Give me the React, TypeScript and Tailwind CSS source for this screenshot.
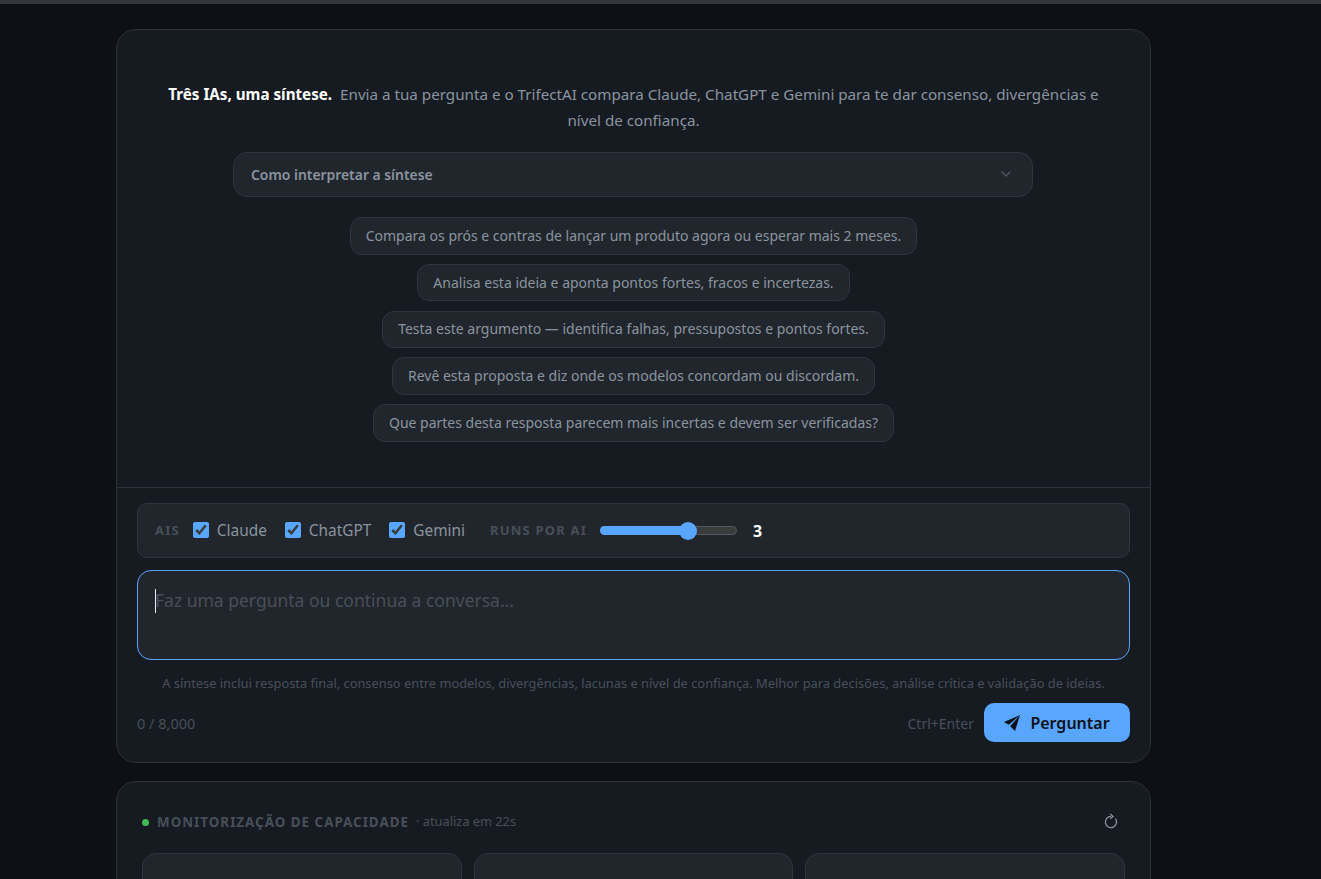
import { ChevronDown } from "lucide-react"

const prompts = [
  "Compara os prós e contras de lançar um produto agora ou esperar mais 2 meses.",
  "Analisa esta ideia e aponta pontos fortes, fracos e incertezas.",
  "Testa este argumento — identifica falhas, pressupostos e pontos fortes.",
  "Revê esta proposta e diz onde os modelos concordam ou discordam.",
  "Que partes desta resposta parecem mais incertas e devem ser verificadas?",
]

const models = ["Claude", "ChatGPT", "Gemini"]
const providers = ["CLAUDE", "OPENAI", "GEMINI"]

function PlaneIcon() {
  return (
    <svg viewBox="0 0 16 16" className="h-[16px] w-[16px] fill-current">
      <path d="M16 0 0 7l4.8 2.8L16 0Zm0 0L6.2 11.2 11 16 16 0Z" />
    </svg>
  )
}

function RefreshIcon() {
  return (
    <svg viewBox="0 0 16 16" fill="none" stroke="currentColor" strokeWidth="1.3" className="h-[16px] w-[16px]">
      <path d="M12.4 5.6A5.6 5.6 0 1 1 8 3.4" />
      <path d="M7.4 1 10 3.4 7.4 5.8" />
    </svg>
  )
}

export default function App() {
  return (
    <div className="h-[879px] overflow-hidden bg-[#0d1014] font-['Noto_Sans','Open_Sans',sans-serif]">
      <div className="h-[4px] bg-[#34363a]" />
      <main className="ml-[116px] flex w-[1035px] flex-col gap-[18px] pt-[25px]">
        <section className="h-[734px] rounded-[20px] border border-[#2d323a] bg-[#161b22]">
          <div className="flex h-[458px] flex-col items-center border-b border-[#2d323a] px-[40px] pt-[51px]">
            <p className="text-center text-[15.2px] leading-[26px] text-[#8b949e]">
              <strong className="font-bold text-white">Três IAs, uma síntese.</strong>
              {"  "}
              <span className="ml-1">
                Envia a tua pergunta e o TrifectAI compara Claude, ChatGPT e Gemini para te dar
                consenso, divergências e nível de confiança.
              </span>
            </p>
            <button className="mr-[1px] mt-[19px] flex h-[45px] w-[800px] shrink-0 items-center justify-between rounded-[14px] border border-[#30353d] bg-[#21262d] pl-[17px] pr-[18px] text-[13.9px] font-semibold text-[#8b949e]">
              <span className="pt-[2px]">Como interpretar a síntese</span>
              <ChevronDown className="mb-[2px] h-4 w-4 text-[#4b5159]" strokeWidth={2.5} />
            </button>
            <div className="mt-[20px] flex flex-col items-center gap-[9.25px]">
              {prompts.map((p) => (
                <button
                  key={p}
                  className="flex h-[37.5px] items-center rounded-[12px] border border-[#30353d] bg-[#21262d] px-[15px] pb-[1px] text-[14px] text-[#8b949e]"
                >
                  {p}
                </button>
              ))}
            </div>
          </div>

          <div className="px-[20px] pt-[15px]">
            <div className="flex h-[55px] items-center rounded-[10px] border border-[#30353d] bg-[#21262d] pl-[17px]">
              <span className="mr-[13px] text-[13px] font-bold tracking-[1.2px] text-[#484f58]">AIS</span>
              {models.map((m) => (
                <label key={m} className="mr-[18px] flex items-center gap-[8px] text-[15.4px] text-[#8b949e]">
                  <input type="checkbox" checked readOnly className="h-4 w-4 accent-[#58a6ff]" />
                  {m}
                </label>
              ))}
              <span className="ml-[7px] text-[13px] font-bold tracking-[1.2px] text-[#484f58]">RUNS POR AI</span>
              <div className="relative ml-[13px] h-[9px] w-[137px] rounded-full border border-[#55585d] bg-[#3a3b3d]">
                <div className="absolute -inset-y-px -left-px w-[88px] rounded-l-full bg-[#58a6ff]" />
                <div className="absolute left-[78px] top-1/2 h-[18px] w-[18px] -translate-y-1/2 rounded-full bg-[#58a6ff]" />
              </div>
              <span className="ml-[16px] text-[16px] font-bold text-white">3</span>
            </div>

            <div className="relative mt-[12px] h-[90px] rounded-[14px] border border-[#58a6ff] bg-[#21262d]">
              <textarea
                readOnly
                placeholder="Faz uma pergunta ou continua a conversa..."
                className="h-full w-full resize-none bg-transparent px-[17px] py-[16px] text-[17.5px] leading-[27px] text-white outline-none placeholder:text-[#484f58]"
              />
              <span className="absolute left-[17px] top-[18px] h-[24px] w-px bg-[#e6edf3]" />
            </div>

            <p className="mt-[15px] text-center text-[12.85px] leading-[17px] text-[#484f58]">
              A síntese inclui resposta final, consenso entre modelos, divergências, lacunas e nível
              de confiança. Melhor para decisões, análise crítica e validação de ideias.
            </p>

            <div className="mt-[11px] flex items-center justify-between">
              <span className="pt-[2px] text-[14.5px] text-[#484f58]">0 / 8,000</span>
              <div className="flex items-center gap-[10px]">
                <span className="pt-[1px] text-[14px] text-[#484f58]">Ctrl+Enter</span>
                <button className="flex h-[39px] w-[146px] items-center justify-center gap-[10px] rounded-[10px] bg-[#58a6ff] text-[16px] font-semibold text-[#0d1117]">
                  <PlaneIcon />
                  Perguntar
                </button>
              </div>
            </div>
          </div>
        </section>

        <section className="h-[300px] rounded-[20px] border border-[#2d323a] bg-[#161b22] px-[25px] pt-[29px]">
          <div className="flex h-[22px] items-center">
            <span className="h-[7px] w-[7px] rounded-full bg-[#3fb950]" />
            <span className="ml-[8px] text-[13.4px] font-bold tracking-[1px] text-[#484f58]">
              MONITORIZAÇÃO DE CAPACIDADE
            </span>
            <span className="ml-[7px] text-[12.8px] text-[#484f58]">· atualiza em 22s</span>
            <span className="mb-[2px] ml-auto mr-[6px] text-[#8b949e]">
              <RefreshIcon />
            </span>
          </div>
          <div className="mt-[20px] grid grid-cols-3 gap-[12px]">
            {providers.map((p) => (
              <div key={p} className="h-[120px] rounded-[14px] border border-[#30353d] bg-[#21262d] px-[22px] pt-[19px]">
                <span className="text-[12px] font-bold tracking-[1px] text-[#8b949e]">{p}</span>
              </div>
            ))}
          </div>
        </section>
      </main>
    </div>
  )
}
